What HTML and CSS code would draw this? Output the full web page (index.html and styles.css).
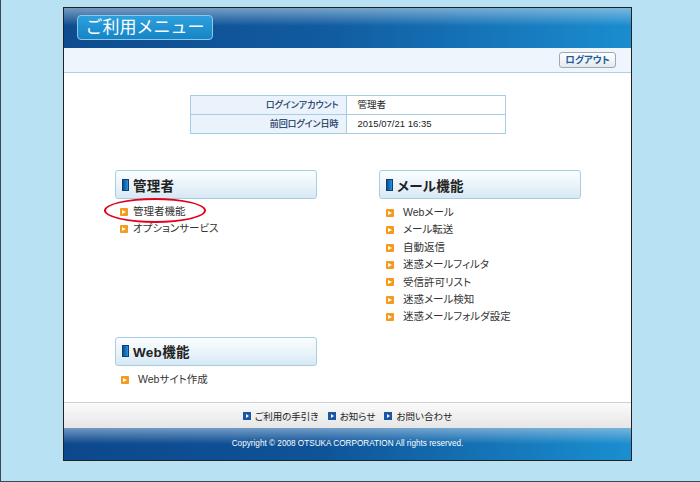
FILE: index.html
```html
<!DOCTYPE html>
<html lang="ja">

<head>
    <meta charset="UTF-8">
    <title>ご利用メニュー</title>
    <link rel="stylesheet" href="styles.css">
</head>

<body>
    <div class="page">
        <div class="panel">
            <header class="header">
                <div class="title">ご利用メニュー</div>
            </header>
            <div class="subbar">
                <a href="#" class="logout">ログアウト</a>
            </div>
            <div class="main">
                <table class="info">
                    <tr>
                        <th>ログインアカウント</th>
                        <td>管理者</td>
                    </tr>
                    <tr>
                        <th>前回ログイン日時</th>
                        <td>2015/07/21 16:35</td>
                    </tr>
                </table>
                <div class="sections">
                    <div class="section">
                        <h2 class="section-title"><span class="bar"></span>管理者</h2>
                        <ul class="menu menu-admin">
                            <li><span class="arrow"></span>管理者機能<span class="circle"></span></li>
                            <li><span class="arrow"></span>オプションサービス</li>
                        </ul>
                    </div>
                    <div class="section">
                        <h2 class="section-title"><span class="bar"></span>メール機能</h2>
                        <ul class="menu menu-mail">
                            <li><span class="arrow"></span>Webメール</li>
                            <li><span class="arrow"></span>メール転送</li>
                            <li><span class="arrow"></span>自動返信</li>
                            <li><span class="arrow"></span>迷惑メールフィルタ</li>
                            <li><span class="arrow"></span>受信許可リスト</li>
                            <li><span class="arrow"></span>迷惑メール検知</li>
                            <li><span class="arrow"></span>迷惑メールフォルダ設定</li>
                        </ul>
                    </div>
                    <div class="section">
                        <h2 class="section-title"><span class="bar"></span>Web機能</h2>
                        <ul class="menu menu-web">
                            <li><span class="arrow"></span>Webサイト作成</li>
                        </ul>
                    </div>
                </div>
            </div>
            <div class="links">
                <a href="#"><span class="play"></span>ご利用の手引き</a>
                <a href="#"><span class="play"></span>お知らせ</a>
                <a href="#"><span class="play"></span>お問い合わせ</a>
            </div>
            <footer class="footer">Copyright &copy; 2008 OTSUKA CORPORATION All rights reserved.</footer>
        </div>
    </div>
</body>

</html>
```

FILE: styles.css
```css
body {
    margin: 0;
    padding: 0;
    background: #b9e1f4;
    font-family: "Liberation Sans", "Noto Sans CJK JP", sans-serif;
    font-feature-settings: "palt";
    color: #222;
}

.page {
    width: 700px;
    height: 482px;
    border-left: 1px solid #3a4a55;
    border-bottom: 1px solid #3a4a55;
    padding: 7px 0 0 62px;
    box-sizing: border-box;
}

.panel {
    width: 567px;
    height: 452px;
    border: 1px solid #222;
    background: #fff;
    display: flex;
    flex-direction: column;
}

.header {
    height: 40px;
    padding: 7px 0 0 13px;
    box-sizing: border-box;
    background:
        linear-gradient(to bottom, rgba(200, 220, 235, 0.55), rgba(255, 255, 255, 0) 45%),
        linear-gradient(to right, #0e4c8f, #115a9f 45%, #1a8dcf);
}

.title {
    width: 134px;
    height: 23px;
    border: 1px solid #8fc6ea;
    border-radius: 4px;
    background: linear-gradient(to bottom, #2da0dc, #1685c6);
    color: #fff;
    font-size: 17px;
    line-height: 23px;
    text-align: center;
    font-feature-settings: normal;
}

.subbar {
    height: 24px;
    background: #eef5fc;
    border-bottom: 1px solid #a9d0e6;
    display: flex;
    justify-content: flex-end;
    align-items: center;
    padding-right: 15px;
}

.logout {
    width: 55px;
    height: 14px;
    border: 1px solid #9aaab5;
    border-radius: 3px;
    background: linear-gradient(to bottom, #ffffff, #e6e9ec);
    color: #1d5d9f;
    font-size: 9.5px;
    font-weight: bold;
    line-height: 14px;
    text-align: center;
    text-decoration: none;
}

.main {
    flex: 1;
    padding-top: 22px;
}

.info {
    width: 316px;
    margin: 0 auto;
    border-collapse: collapse;
    font-size: 9.5px;
}

.info th,
.info td {
    height: 18px;
    border: 1px solid #a7cde4;
    padding: 0;
    line-height: 18px;
}

.info th {
    width: 148px;
    background: #eaf3fb;
    color: #1a3563;
    font-size: 9px;
    font-weight: normal;
    text-align: right;
    padding-right: 7px;
    -webkit-text-stroke: 0.2px #1a3563;
}

.info td {
    padding-left: 11px;
    color: #222;
}

.sections {
    display: grid;
    grid-template-columns: 202px 202px;
    column-gap: 62px;
    row-gap: 11px;
    padding: 36px 0 0 51px;
    align-items: start;
}

.section-title {
    margin: 0;
    height: 27px;
    border: 1px solid #a7cde3;
    border-radius: 3px;
    background: linear-gradient(to bottom, #fbfdff, #e9f3fa 55%, #d6e8f4);
    display: flex;
    align-items: center;
    font-size: 13.5px;
    font-weight: bold;
    color: #222;
    letter-spacing: 0.3px;
}

.bar {
    width: 5px;
    height: 10px;
    margin: 0 4px 0 6px;
    background: linear-gradient(to right, #0b4f96, #2a92d6);
    border: 1px solid #0b3f78;
}

.menu {
    list-style: none;
    margin: 0;
    padding: 4px 0 0 5px;
    font-size: 10.5px;
    line-height: 17.4px;
    color: #333;
}

.menu li {
    display: flex;
    align-items: center;
    position: relative;
}

.arrow {
    width: 8px;
    height: 8px;
    margin-right: 5px;
    background: #f39a1f;
    border-radius: 1px;
    position: relative;
}

.arrow::after {
    content: "";
    position: absolute;
    left: 2px;
    top: 2px;
    border-left: 4px solid #fff;
    border-top: 2px solid transparent;
    border-bottom: 2px solid transparent;
}

.menu-mail {
    padding-left: 7px;
    padding-top: 5px;
}

.menu-mail .arrow,
.menu-web .arrow {
    margin-right: 9px;
}

.menu-web {
    padding-left: 6px;
    padding-top: 5px;
}

.circle {
    position: absolute;
    left: -16px;
    top: -5px;
    width: 98px;
    height: 21px;
    border: 2px solid #e3001b;
    border-radius: 50%;
}

.links {
    height: 25px;
    border-top: 1px solid #cfcfcf;
    background: linear-gradient(to bottom, #fbfbfb, #e6e6e6);
    display: flex;
    justify-content: center;
    align-items: center;
    gap: 9px;
}

.links a {
    display: flex;
    align-items: center;
    font-size: 9.5px;
    color: #222;
    text-decoration: none;
}

.play {
    width: 8px;
    height: 8px;
    margin-right: 4px;
    background: #1b56a2;
    position: relative;
}

.play::after {
    content: "";
    position: absolute;
    left: 3px;
    top: 2px;
    border-left: 3px solid #fff;
    border-top: 2px solid transparent;
    border-bottom: 2px solid transparent;
}

.footer {
    height: 32px;
    background:
        linear-gradient(to bottom, rgba(180, 205, 230, 0.6), rgba(255, 255, 255, 0) 50%),
        linear-gradient(to right, #0d488b, #0f5398 45%, #1a8fd0);
    color: #fff;
    font-size: 8.2px;
    line-height: 32px;
    text-align: center;
}
```
